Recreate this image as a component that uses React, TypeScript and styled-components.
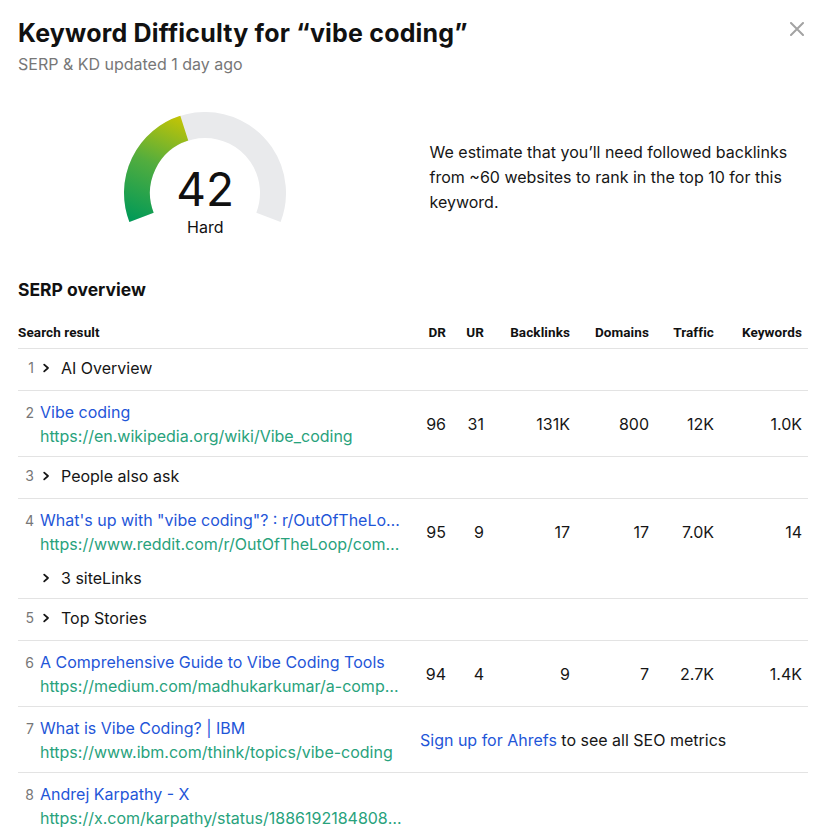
import React from "react";
import styled, { createGlobalStyle } from "styled-components";

const Global = createGlobalStyle`
  html, body { margin: 0; padding: 0; background: #ffffff; }
  body { font-family: Inter, "Noto Sans", sans-serif; color: #161616; }
  * { box-sizing: border-box; }
`;

const Page = styled.div`
  padding: 17px 6px 0 18px;
  width: 814px;
`;

const HeaderBar = styled.div`
  display: flex;
  justify-content: space-between;
  align-items: flex-start;
`;

const Title = styled.h1`
  margin: 0;
  font-family: Inter, sans-serif;
  font-weight: 700;
  font-size: 25px;
  line-height: 32px;
  letter-spacing: 0.2px;
  color: #111;
`;

const CloseButton = styled.button`
  border: 0;
  background: transparent;
  padding: 0;
  margin: 5px 4px 0 0;
  width: 14px;
  height: 14px;
  display: flex;
  cursor: pointer;
  color: #a3a3a3;
`;

const Subtitle = styled.div`
  margin-top: 5px;
  font-size: 16px;
  line-height: 20px;
  color: #777;
`;

const Summary = styled.div`
  display: flex;
  align-items: flex-start;
  margin-top: 38px;
`;

const GaugeColumn = styled.div`
  width: 376px;
  display: flex;
  justify-content: center;
`;

const Gauge = styled.div`
  position: relative;
  width: 162px;
  height: 126px;
`;

const GaugeCenter = styled.div`
  position: absolute;
  left: 0;
  right: 0;
  top: 54px;
  display: flex;
  flex-direction: column;
  align-items: center;
`;

const Score = styled.div`
  font-size: 46px;
  line-height: 1;
  font-weight: 400;
  color: #111;
`;

const ScoreLabel = styled.div`
  margin-top: 7px;
  font-size: 16px;
  line-height: 1;
  color: #111;
`;

const Estimate = styled.p`
  margin: 0 0 0 37px;
  padding-top: 28px;
  font-size: 16px;
  line-height: 25px;
  color: #161616;
  width: 380px;
`;

const SectionTitle = styled.h2`
  margin: 40px 0 0;
  font-family: Inter, sans-serif;
  font-weight: 700;
  font-size: 17.5px;
  line-height: 24px;
  color: #111;
`;

const COLS = "392px 42px 38px 86px 79px 65px 88px";

const Table = styled.div`
  margin-top: 22px;
  width: 790px;
`;

const HeadRow = styled.div`
  display: grid;
  grid-template-columns: ${COLS};
  padding-bottom: 8px;
  border-bottom: 1px solid #e3e3e3;
`;

const HeadCell = styled.div<{ $right?: boolean }>`
  font-family: Roboto, "Liberation Sans", sans-serif;
  font-weight: 700;
  font-size: 13.5px;
  line-height: 16px;
  letter-spacing: 0.1px;
  color: #111;
  text-align: ${(p) => (p.$right ? "right" : "left")};
  padding-right: ${(p) => (p.$right ? "6px" : "0")};
`;

const Row = styled.div<{ $group?: boolean }>`
  padding: ${(p) => (p.$group ? "7px 0 10px" : "9px 0 8px")};
  border-bottom: 1px solid #e3e3e3;
`;

const RowGrid = styled.div`
  display: grid;
  grid-template-columns: ${COLS};
  align-items: center;
`;

const ResultCell = styled.div`
  display: flex;
  align-items: baseline;
  min-width: 0;
  padding-right: 6px;
`;

const Rank = styled.span`
  width: 16px;
  flex: none;
  text-align: right;
  font-size: 14px;
  line-height: 24px;
  color: #777;
  margin-right: 6px;
`;

const ResultBody = styled.div`
  min-width: 0;
  flex: 1;
`;

const Line = styled.a<{ $kind: "title" | "url" }>`
  display: block;
  font-size: 16px;
  line-height: 24px;
  color: ${(p) => (p.$kind === "title" ? "#1f56d8" : "#28a27c")};
  text-decoration: none;
  white-space: nowrap;
  overflow: hidden;
  text-overflow: ellipsis;
`;

const Toggle = styled.div`
  display: flex;
  align-items: center;
  font-size: 16px;
  line-height: 24px;
  color: #161616;
`;

const SiteLinks = styled.div`
  margin: 10px 0 0 22px;
`;

const Metric = styled.div`
  text-align: right;
  padding-right: 6px;
  font-size: 16px;
  line-height: 24px;
  color: #161616;
`;

const Upsell = styled.div`
  grid-column: 2 / -1;
  padding-left: 10px;
  font-size: 16px;
  line-height: 24px;
  color: #161616;
`;

const UpsellLink = styled.a`
  color: #1f56d8;
  text-decoration: none;
`;

const Chevron = () => (
  <svg width="21" height="10" viewBox="0 0 21 10" aria-hidden>
    <path d="M4.2 1.6 L8 5 L4.2 8.4" fill="none" stroke="#161616" strokeWidth="1.8" strokeLinecap="round" strokeLinejoin="round" />
  </svg>
);

type Metrics = [string, string, string, string, string, string];

type Item =
  | { kind: "group"; label: string }
  | { kind: "link"; title: string; url: string; metrics?: Metrics; sitelinks?: string; upsell?: boolean };

const items: Item[] = [
  { kind: "group", label: "AI Overview" },
  { kind: "link", title: "Vibe coding", url: "https://en.wikipedia.org/wiki/Vibe_coding", metrics: ["96", "31", "131K", "800", "12K", "1.0K"] },
  { kind: "group", label: "People also ask" },
  {
    kind: "link",
    title: 'What\'s up with "vibe coding"? : r/OutOfTheLoop',
    url: "https://www.reddit.com/r/OutOfTheLoop/comments/vibe_coding",
    metrics: ["95", "9", "17", "17", "7.0K", "14"],
    sitelinks: "3 siteLinks",
  },
  { kind: "group", label: "Top Stories" },
  {
    kind: "link",
    title: "A Comprehensive Guide to Vibe Coding Tools",
    url: "https://medium.com/madhukarkumar/a-comprehensive-guide-to-vibe-coding-tools",
    metrics: ["94", "4", "9", "7", "2.7K", "1.4K"],
  },
  { kind: "link", title: "What is Vibe Coding? | IBM", url: "https://www.ibm.com/think/topics/vibe-coding", upsell: true },
  { kind: "link", title: "Andrej Karpathy - X", url: "https://x.com/karpathy/status/1886192184808149383" },
];

const GaugeArc = () => {
  const c = 81;
  const r = 68;
  const pt = (deg: number) => {
    const a = (deg * Math.PI) / 180;
    return `${(c + r * Math.cos(a)).toFixed(2)} ${(c - r * Math.sin(a)).toFixed(2)}`;
  };
  const start = 201;
  const end = -21;
  const value = 42;
  const valDeg = start - ((start - end) * value) / 100;
  return (
    <svg width="162" height="126" viewBox="0 0 162 126" aria-hidden>
      <defs>
        <linearGradient id="kdGrad" gradientUnits="userSpaceOnUse" x1="20" y1="112" x2="66" y2="4">
          <stop offset="0" stopColor="#039a57" />
          <stop offset="0.5" stopColor="#52ad3e" />
          <stop offset="1" stopColor="#cdc600" />
        </linearGradient>
      </defs>
      <path d={`M ${pt(start)} A ${r} ${r} 0 1 1 ${pt(end)}`} fill="none" stroke="#e9eaec" strokeWidth="26" />
      <path d={`M ${pt(start)} A ${r} ${r} 0 0 1 ${pt(valDeg)}`} fill="none" stroke="url(#kdGrad)" strokeWidth="26" />
    </svg>
  );
};

export default function App() {
  return (
    <Page>
      <Global />
      <HeaderBar>
        <Title>Keyword Difficulty for “vibe coding”</Title>
        <CloseButton aria-label="Close">
          <svg width="14" height="14" viewBox="0 0 14 14">
            <path d="M1 1 L13 13 M13 1 L1 13" stroke="currentColor" strokeWidth="2" strokeLinecap="round" />
          </svg>
        </CloseButton>
      </HeaderBar>
      <Subtitle>SERP &amp; KD updated 1 day ago</Subtitle>

      <Summary>
        <GaugeColumn>
          <Gauge>
            <GaugeArc />
            <GaugeCenter>
              <Score>42</Score>
              <ScoreLabel>Hard</ScoreLabel>
            </GaugeCenter>
          </Gauge>
        </GaugeColumn>
        <Estimate>
          We estimate that you’ll need followed backlinks from ~60 websites to rank in the top 10 for this keyword.
        </Estimate>
      </Summary>

      <SectionTitle>SERP overview</SectionTitle>

      <Table>
        <HeadRow>
          <HeadCell>Search result</HeadCell>
          <HeadCell $right>DR</HeadCell>
          <HeadCell $right>UR</HeadCell>
          <HeadCell $right>Backlinks</HeadCell>
          <HeadCell $right>Domains</HeadCell>
          <HeadCell $right>Traffic</HeadCell>
          <HeadCell $right>Keywords</HeadCell>
        </HeadRow>
        {items.map((it, i) => (
          <Row key={i} $group={it.kind === "group"}>
            <RowGrid>
              <ResultCell>
                <Rank>{i + 1}</Rank>
                <ResultBody>
                  {it.kind === "group" ? (
                    <Toggle>
                      <Chevron />
                      {it.label}
                    </Toggle>
                  ) : (
                    <>
                      <Line $kind="title" href="#">{it.title}</Line>
                      <Line $kind="url" href="#">{it.url}</Line>
                    </>
                  )}
                </ResultBody>
              </ResultCell>
              {it.kind === "link" && it.metrics && it.metrics.map((m, j) => <Metric key={j}>{m}</Metric>)}
              {it.kind === "link" && it.upsell && (
                <Upsell>
                  <UpsellLink href="#">Sign up for Ahrefs</UpsellLink> to see all SEO metrics
                </Upsell>
              )}
            </RowGrid>
            {it.kind === "link" && it.sitelinks && (
              <SiteLinks>
                <Toggle>
                  <Chevron />
                  {it.sitelinks}
                </Toggle>
              </SiteLinks>
            )}
          </Row>
        ))}
      </Table>
    </Page>
  );
}
